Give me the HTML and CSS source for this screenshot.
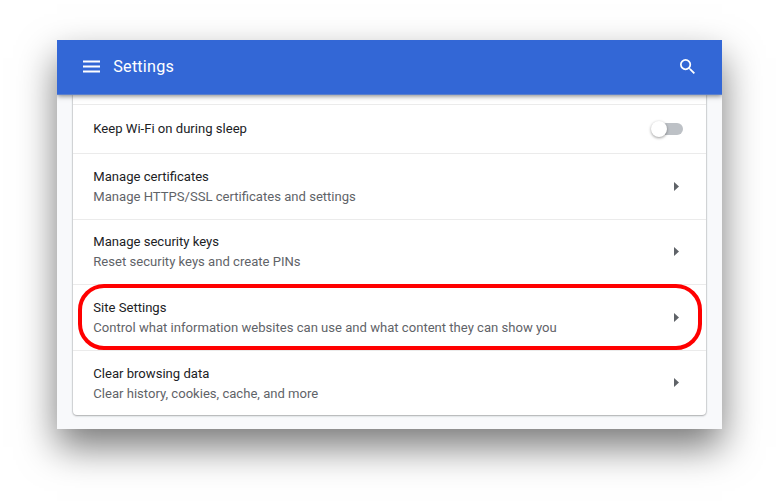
FILE: index.html
```html
<!DOCTYPE html>
<html lang="en">
<head>
<meta charset="utf-8">
<title>Settings</title>
<link rel="stylesheet" href="styles.css">
</head>
<body>
<main class="window">
  <header class="toolbar">
    <svg class="menu" viewBox="0 0 17 13"><path d="M0 .5h17v2H0zM0 5.5h17v2H0zM0 10.5h17v2H0z"/></svg>
    <h1 class="heading">Settings</h1>
    <svg class="search" viewBox="3 3 17.5 17.5"><path d="M15.5 14h-.79l-.28-.27A6.47 6.47 0 0 0 16 9.5 6.5 6.5 0 1 0 9.5 16c1.61 0 3.09-.59 4.23-1.57l.27.28v.79l5 4.99L20.49 19l-4.99-5zm-6 0C7.01 14 5 11.99 5 9.5S7.01 5 9.5 5 14 7.01 14 9.5 11.99 14 9.5 14z"/></svg>
  </header>
  <div class="content">
    <section class="card">
      <div class="row row-toggle">
        <div class="title">Keep Wi-Fi on during sleep</div>
        <div class="toggle"><span class="knob"></span></div>
      </div>
      <div class="row">
        <div><div class="title">Manage certificates</div><div class="sub">Manage HTTPS/SSL certificates and settings</div></div>
        <svg class="arrow" viewBox="0 0 5 9"><path d="M0 0l5 4.5L0 9z"/></svg>
      </div>
      <div class="row">
        <div><div class="title">Manage security keys</div><div class="sub">Reset security keys and create PINs</div></div>
        <svg class="arrow" viewBox="0 0 5 9"><path d="M0 0l5 4.5L0 9z"/></svg>
      </div>
      <div class="row row-marked">
        <div><div class="title">Site Settings</div><div class="sub">Control what information websites can use and what content they can show you</div></div>
        <svg class="arrow" viewBox="0 0 5 9"><path d="M0 0l5 4.5L0 9z"/></svg>
        <div class="marker"></div>
      </div>
      <div class="row">
        <div><div class="title">Clear browsing data</div><div class="sub">Clear history, cookies, cache, and more</div></div>
        <svg class="arrow" viewBox="0 0 5 9"><path d="M0 0l5 4.5L0 9z"/></svg>
      </div>
    </section>
  </div>
</main>
</body>
</html>
```
FILE: styles.css
```css
* { box-sizing: border-box; }
body {
  margin: 0;
  height: 504px;
  padding: 40px 58px 0 57px;
  overflow: hidden;
  background: #fff;
  font-family: Roboto, "Liberation Sans", sans-serif;
}
.window {
  height: 389px;
  background: #f8f9fb;
  box-shadow: 0 18px 36px rgba(0, 0, 0, .53);
}
.toolbar {
  position: relative;
  z-index: 1;
  display: flex;
  align-items: center;
  height: 55px;
  padding: 0 27px 1px 25.6px;
  background: #3367d6;
  border-bottom: 1px solid #5a7fcd;
  box-shadow: 0 1px 5px rgba(0, 0, 0, .5);
  clip-path: inset(0 0 -8px 0);
}
.menu { width: 17px; height: 13px; fill: #fff; }
.heading {
  margin: 0 auto 0 13.7px;
  color: #fff;
  font-size: 16.2px;
  font-weight: 400;
  letter-spacing: .2px;
}
.search { width: 15px; height: 15px; fill: #fff; }
.content { padding: 0 16px; }
.card {
  height: 320px;
  padding-top: 9px;
  background: #fff;
  border-radius: 0 0 4px 4px;
  box-shadow: 0 1px 2px rgba(60, 64, 67, .3), 0 0 1px 1px rgba(60, 64, 67, .15);
}
.row {
  position: relative;
  display: flex;
  align-items: center;
  justify-content: space-between;
  height: 65.6px;
  padding: .9px 27px 0 20.3px;
  border-top: 1px solid #ebebeb;
  line-height: 20px;
  font-size: 13.08px;
}
.row-toggle { height: 49px; padding: 0 23px 0 20.3px; }
.title { color: #202124; }
.sub { color: #5f6368; }
.arrow { width: 5px; height: 9px; margin-bottom: 1.2px; fill: #5f6368; }
.toggle {
  position: relative;
  width: 28px;
  height: 12px;
  border-radius: 6px;
  background: #bdc1c6;
}
.knob {
  position: absolute;
  left: -4px;
  top: -2px;
  width: 16px;
  height: 16px;
  border-radius: 50%;
  background: #fff;
  box-shadow: 0 1px 3px rgba(0, 0, 0, .4);
}
.marker {
  position: absolute;
  z-index: 1;
  inset: -1px 4px -.4px 5px;
  border: 4px solid #f00;
  border-radius: 26px;
}
```
